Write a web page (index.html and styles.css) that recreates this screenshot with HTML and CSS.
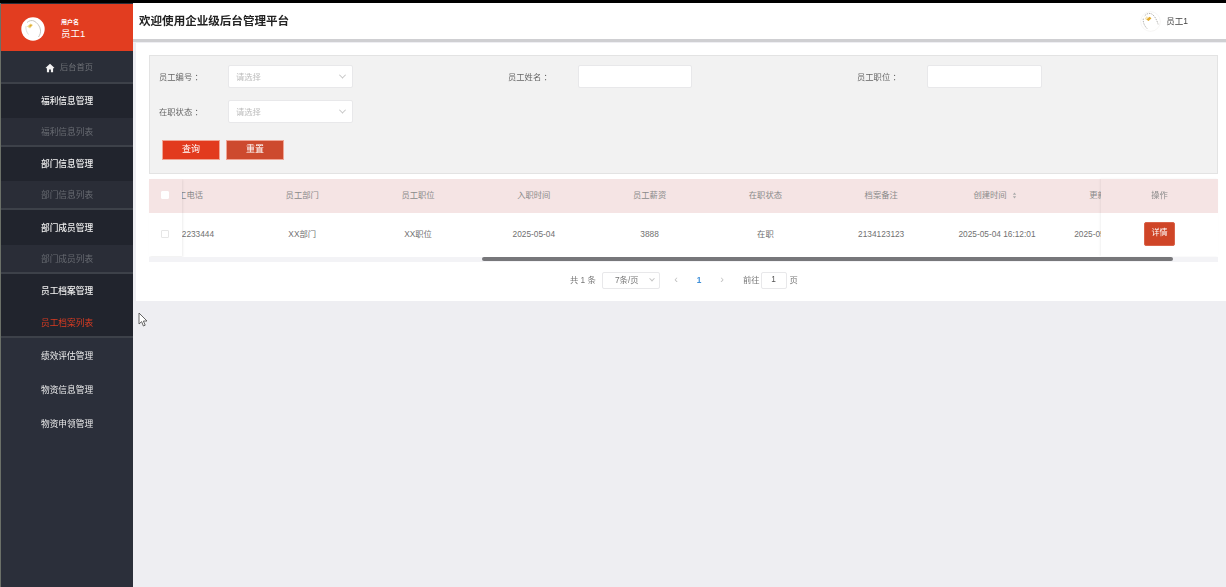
FILE: index.html
```html
<!DOCTYPE html>
<html lang="zh">
<head>
<meta charset="utf-8">
<title>企业级后台管理平台</title>
<link rel="stylesheet" href="styles.css">
</head>
<body>
<div class="page">
  <div class="topline"></div>
  <div class="layout">
    <aside class="sidebar">
      <div class="profile">
        <svg class="profile-avatar" viewBox="0 0 24 24" width="24" height="24">
          <circle cx="12" cy="12" r="11.7" fill="#fff"/>
          <path d="M6 5.500c2-2 5-2.500 7-1.500 3 1.500 6 5 6.500 9 .3 2.500-.5 5-2 7" fill="none" stroke="#c9c6c0" stroke-width="1"/>
          <path d="M5 9c-.5 3 .5 6 2.500 8.500" fill="none" stroke="#d8d5d0" stroke-width=".8"/>
          <path d="M6 9.500l3.500-3 2.500 1.500-3 3.500z" fill="#f1d98a"/>
          <path d="M8 9l2-1.500 1 .8-2 1.700z" fill="#dca72c"/>
        </svg>
        <div class="profile-text">
          <span class="profile-role">用户名</span>
          <span class="profile-name">员工1</span>
        </div>
      </div>
      <nav class="menu">
        <a class="menu-home">
          <svg viewBox="0 0 12 12" width="10" height="10"><path d="M6 1 .8 5.800l.7.700.8-.7V11h2.600V7.800h2.200V11h2.600V5.800l.8.700.7-.7z" fill="#f2f2f2"/></svg>
          <span>后台首页</span>
        </a>
        <a class="menu-group">福利信息管理</a>
        <a class="menu-sub">福利信息列表</a>
        <a class="menu-group">部门信息管理</a>
        <a class="menu-sub">部门信息列表</a>
        <a class="menu-group menu-group-tall">部门成员管理</a>
        <a class="menu-sub">部门成员列表</a>
        <a class="menu-group">员工档案管理</a>
        <a class="menu-sub menu-active">员工档案列表</a>
        <a class="menu-plain">绩效评估管理</a>
        <a class="menu-plain">物资信息管理</a>
        <a class="menu-plain">物资申领管理</a>
      </nav>
    </aside>
    <main class="main">
      <header class="header">
        <h1 class="title">欢迎使用企业级后台管理平台</h1>
        <div class="user">
          <svg viewBox="0 0 22 22" width="21" height="21">
            <circle cx="11" cy="11" r="10.300" fill="#fff" stroke="#efede9" stroke-width=".5"/>
            <path d="M5 5c2-2.500 5-3 7-2 3 1.500 5.500 6 7 11M3.500 8c-.5 3 .5 7 4 10.500" fill="none" stroke="#8f8c86" stroke-width=".7" stroke-dasharray="1.500 1"/>
            <path d="M6.500 9l3.500-3 2 1.500-3 3z" fill="#e2a92b"/>
            <path d="M5 8l2-2.500 1.500 1-2.500 2.500z" fill="#f4e3b0"/>
          </svg>
          <span>员工1</span>
        </div>
      </header>
      <section class="card">
        <form class="filter">
          <div class="filter-row">
            <div class="field"><label>员工编号 ：</label><div class="select"><span>请选择</span><i class="chev"></i></div></div>
            <div class="field field-wide"><label>员工姓名 ：</label><div class="input"></div></div>
            <div class="field field-wide"><label>员工职位 ：</label><div class="input input-wide"></div></div>
          </div>
          <div class="filter-row">
            <div class="field"><label>在职状态 ：</label><div class="select"><span>请选择</span><i class="chev"></i></div></div>
          </div>
          <div class="actions">
            <button type="button" class="btn btn-query">查询</button>
            <button type="button" class="btn btn-reset">重置</button>
          </div>
        </form>
        <div class="table">
          <div class="scroller">
            <div class="grid grid-head">
              <div>员工电话</div><div>员工部门</div><div>员工职位</div><div>入职时间</div><div>员工薪资</div><div>在职状态</div><div>档案备注</div>
              <div>创建时间<svg class="sort" viewBox="0 0 6 8" width="5" height="7"><path d="M3 .5 5 3H1zM3 7.500 1 5h4z" fill="#aaa"/></svg></div>
              <div>更新时间<svg class="sort" viewBox="0 0 6 8" width="5" height="7"><path d="M3 .5 5 3H1zM3 7.500 1 5h4z" fill="#aaa"/></svg></div><div></div>
            </div>
            <div class="grid grid-row">
              <div>122332233444</div><div>XX部门</div><div>XX职位</div><div>2025-05-04</div><div>3888</div><div>在职</div><div>2134123123</div><div>2025-05-04 16:12:01</div><div>2025-05-04 16:12:01</div><div></div>
            </div>
          </div>
          <div class="fixed-left">
            <div class="fixed-head"><i class="check check-head"></i></div>
            <div class="fixed-cell"><i class="check"></i></div>
          </div>
          <div class="fixed-right">
            <div class="fixed-head">操作</div>
            <div class="fixed-cell"><button type="button" class="btn-detail">详情</button></div>
          </div>
          <div class="scrollbar"><div class="thumb"></div></div>
        </div>
        <div class="pager">
          <span class="pg-total">共 1 条</span>
          <div class="pg-size"><span>7条/页</span><i class="chev"></i></div>
          <span class="pg-arrow pg-prev">‹</span>
          <span class="pg-num">1</span>
          <span class="pg-arrow">›</span>
          <span class="pg-goto">前往</span>
          <div class="pg-input">1</div>
          <span>页</span>
        </div>
      </section>
    </main>
  </div>
  <svg class="cursor" viewBox="0 0 10 15" width="10" height="15"><path d="M1 1v11l2.600-2.400L5.400 14l1.800-.8-1.800-4.200H9z" fill="#fff" stroke="#555" stroke-width=".9"/></svg>
</div>
</body>
</html>
```
FILE: styles.css
```css
* { box-sizing: border-box; }
html, body { margin: 0; height: 100%; overflow: hidden; }
body {
  font-family: "Liberation Sans", "Noto Sans CJK SC", sans-serif;
  font-size: 8.300px;
  line-height: 12px;
  color: #666;
  background: #eeeef2;
}
.page { position: relative; width: 1226px; height: 587px; display: flex; flex-direction: column; filter: blur(.4px); }
.topline { height: 3px; background: #000; flex: none; }
.layout { flex: 1; display: flex; min-height: 0; }

.sidebar { width: 133px; flex: none; background: #2b2f3a; border-left: 1px solid #6b7068; }
.profile { height: 47px; margin-top: 1px; background: #e23d20; display: flex; align-items: center; padding-left: 20px; gap: 14px; }
.profile-avatar { display: block; margin-top: 3px; }
.profile-text { display: flex; flex-direction: column; align-items: flex-start; color: #fff; padding: 1px 0 0 2px; }
.profile-role { font-size: 6px; font-weight: 700; }
.profile-name { font-size: 9.500px; }

.menu { display: flex; flex-direction: column; font-size: 8.700px; }
.menu a { display: flex; align-items: center; justify-content: center; }
.menu-home { height: 33px; gap: 5px; color: #6f7278; background: #2a2e38; border-bottom: 2px solid #3d4149; padding: 3px 0 0 4px; font-size: 8.200px; }
.menu-group { height: 34px; color: #f1f1f1; background: #21242d; font-weight: 500; }
.menu-group-tall { height: 35px; }
.menu-sub { height: 29px; color: #686b72; background: #2a2d37; border-bottom: 2px solid #3d4149; }
.menu-plain { height: 34px; color: #ececec; padding-top: 2px; }
.menu .menu-active { height: 30px; color: #dc3c22; background: #21242d; padding-top: 2px; }

.main { flex: 1; min-width: 0; display: flex; flex-direction: column; }
.header { height: 39px; flex: none; background: #fff; border-bottom: 3px solid #cfcfd2; display: flex; align-items: center; justify-content: space-between; padding: 0 38px 0 6px; }
.title { margin: 0; font-size: 11.550px; font-weight: 700; color: #222; }
.user { display: flex; align-items: center; gap: 5px; color: #444; font-size: 8.500px; }
.user svg { display: block; }

.card { height: 258px; margin: 1px 0 0 3px; background: #fff; padding: 12px 8px 0 13px; }
.filter { height: 119px; background: #f2f2f2; border: 1px solid #e3e3e3; padding: 9px 0 0 9px; }
.filter-row { display: flex; height: 23px; margin-bottom: 12px; }
.field { width: 349px; display: flex; align-items: center; }
.field label { width: 69px; color: #666; white-space: pre; }
.field-wide label { width: 70px; }
.select, .input { height: 23px; background: #fff; border: 1px solid #e8e8ea; border-radius: 2px; }
.select { width: 125px; display: flex; align-items: center; justify-content: space-between; padding: 0 7px 0 7px; color: #bbb; }
.input { width: 114px; }
.input-wide { width: 115px; }
.chev { width: 5px; height: 5px; border-right: 1px solid #c4c4c4; border-bottom: 1px solid #c4c4c4; transform: rotate(45deg) translate(-1px, -1px); }
.actions { display: flex; gap: 6px; padding-left: 3px; margin-top: 17px; }
.btn { width: 58px; height: 20px; border: 1px solid #f0a595; padding: 0 0 2px; color: #fff; font: inherit; font-size: 9px; }
.btn-query { background: #e23a1e; }
.btn-reset { background: #cd4a2e; }

.table { position: relative; margin-top: 5px; height: 83px; }
.scroller { height: 77px; overflow: hidden; }
.grid { display: grid; grid-template-columns: repeat(9, 115.800px) 117px; margin-left: -20.500px; text-align: center; align-items: center; width: max-content; padding-bottom: 2px; }
.grid-head { height: 34px; background: #f5e4e4; color: #8a8a8a; }
.grid-row { height: 43px; background: #fff; color: #707070; }
.sort { vertical-align: -1px; margin: 0 4px 0 5px; }
.fixed-left, .fixed-right { position: absolute; top: 0; background: #fff; }
.fixed-left { left: 0; width: 33px; box-shadow: 1px 1px 2px rgba(0,0,0,.07); }
.fixed-right { right: 0; width: 117px; box-shadow: -1px 0 2px rgba(0,0,0,.06); color: #8a8a8a; text-align: center; }
.fixed-head { height: 34px; background: #f5e4e4; display: flex; align-items: center; justify-content: center; padding-bottom: 2px; }
.fixed-cell { height: 43px; display: flex; align-items: center; justify-content: center; padding-bottom: 1px; }
.fixed-left .fixed-head, .fixed-left .fixed-cell { padding-right: 1px; }
.check { width: 8px; height: 8px; background: #fff; border: 1px solid #e6e6e6; border-radius: 1px; }
.check-head { border-color: #fff; }
.btn-detail { width: 31px; height: 24px; padding: 0 0 2px; border: 1px solid #d9634a; border-radius: 2px; background: #cf4527; color: #fff; font: inherit; font-size: 8px; }
.scrollbar { position: absolute; left: 0; right: 0; top: 78px; height: 5px; background: #f3f3f6; padding: 0 0 0 333px; }
.thumb { width: 691px; height: 4px; background: #77777a; border-radius: 2px; }

.pager { display: flex; align-items: center; height: 17px; margin-top: 10px; padding-left: 421px; color: #777; }
.pager > span { padding-bottom: 2px; }
.pg-total { width: 32px; }
.pg-size { width: 58px; height: 17px; border: 1px solid #e8e8ea; border-radius: 2px; display: flex; align-items: center; justify-content: space-between; padding: 0 5px 2px 12px; }
.pg-size .chev { width: 4px; height: 4px; }
.pg-arrow { width: 22px; text-align: center; color: #c0c0c0; font-size: 11px; line-height: 1; }
.pg-prev { margin-left: 5px; }
.pg-num { color: #3f8fd8; font-weight: 700; text-align: center; width: 24px; }
.pg-goto { margin-left: 10px; }
.pg-input { width: 26px; height: 17px; margin: 0 3px 0 1px; border: 1px solid #e8e8ea; border-radius: 2px; text-align: center; line-height: 13px; color: #555; }

.cursor { position: absolute; left: 138px; top: 312px; }
```
